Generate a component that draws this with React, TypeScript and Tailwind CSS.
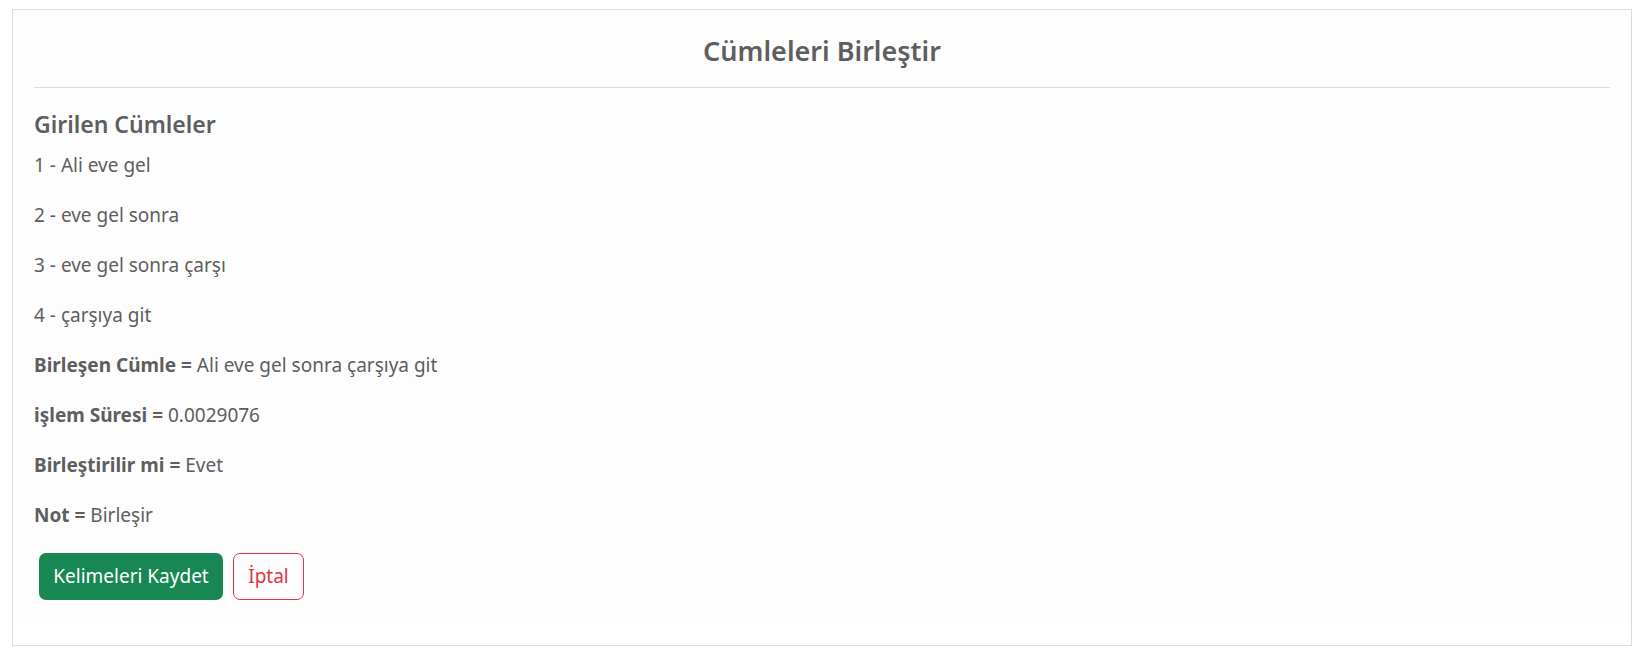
const sentences = ["Ali eve gel", "eve gel sonra", "eve gel sonra çarşı", "çarşıya git"];

const results = [
  { label: "Birleşen Cümle", value: "Ali eve gel sonra çarşıya git" },
  { label: "işlem Süresi", value: "0.0029076" },
  { label: "Birleştirilir mi", value: "Evet" },
  { label: "Not", value: "Birleşir" },
];

const App = () => {
  return (
    <div
      className="min-h-[662px] bg-white pt-[9px] pl-[12px] text-[#5e5e5e]"
      style={{ fontFamily: '"Noto Sans", "Open Sans", sans-serif' }}
    >
      <div className="w-[1620px] border border-[#dcdcdc] bg-white pb-[20px]">
        <div className="bg-[#fdfdfd] px-[21px] pt-[20px] pb-[25px]">
          <h3 className="h-[42px] text-center text-[27px] leading-[42px] font-semibold">
            Cümleleri Birleştir
          </h3>
          <hr className="mt-[15px] border-t border-[#dcdcdc]" />

          <h5 className="mt-[21px] h-[30px] text-[23px] leading-[30px] font-semibold">
            Girilen Cümleler
          </h5>

          <div className="mt-[11px] flex flex-col gap-[20px] text-[19px] leading-[30px]">
            {sentences.map((s, i) => (
              <p key={i}>
                {i + 1} - {s}
              </p>
            ))}
            {results.map((r) => (
              <p key={r.label}>
                <span className="font-bold">{r.label} =</span> {r.value}
              </p>
            ))}
          </div>

          <div className="mt-[23px] flex gap-[10px] pl-[5px]">
            <button className="h-[47px] w-[184px] rounded-[7px] bg-[#198754] text-[19px] text-white">
              Kelimeleri Kaydet
            </button>
            <button className="h-[47px] w-[71px] rounded-[7px] border border-[#dc3545] text-[19px] text-[#dc3545]">
              İptal
            </button>
          </div>
        </div>
      </div>
    </div>
  );
};

export default App;
